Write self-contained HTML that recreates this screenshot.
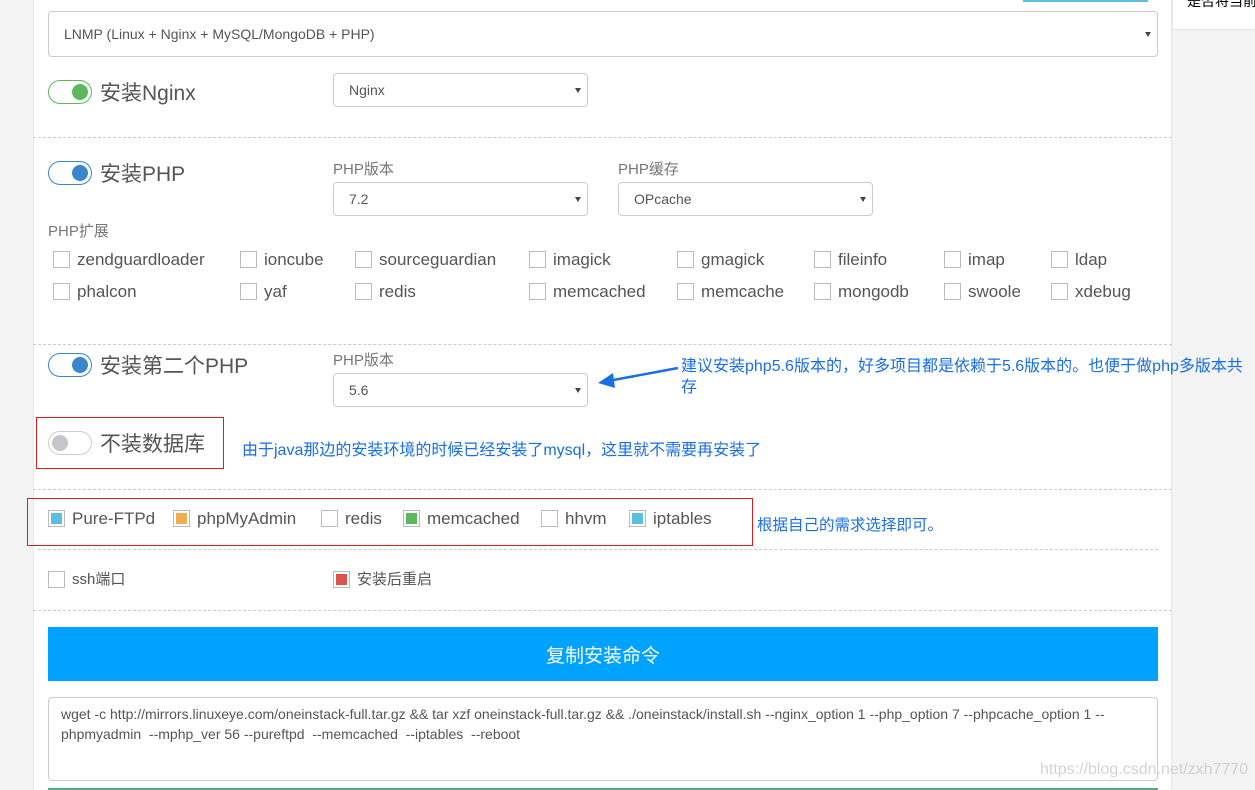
<!DOCTYPE html>
<html><head><meta charset="utf-8"><style>
*{margin:0;padding:0;box-sizing:border-box}
body{width:1255px;height:790px;background:#f3f3f3;position:relative;overflow:hidden;font-family:"Liberation Sans","Noto Sans CJK SC",sans-serif;color:#555}
.a{position:absolute;white-space:nowrap}
.panel{position:absolute;left:33px;top:0;width:1139px;height:790px;background:#fff;border-left:1px solid #e8e8e8;border-right:1px solid #e8e8e8}
.sel{position:absolute;border:1px solid #ccc;border-radius:4px;background:#fff;font-size:14px;color:#555;padding-left:15px;display:flex;align-items:center}
.sel:after{content:"";position:absolute;right:6px;top:50%;margin-top:-2px;border-left:3px solid transparent;border-right:3px solid transparent;border-top:5px solid #444}
.tg{position:absolute;width:44px;height:24px;border-radius:12px;border:1px solid}
.tg i{position:absolute;top:3px;width:16px;height:16px;border-radius:50%}
.big{font-size:21px;color:#555}
.lbl{font-size:15px;color:#777}
.hr{position:absolute;left:33px;width:1139px;border-top:1px dashed #ccc}
.cb{position:absolute;font-size:17px;color:#555;padding-left:24px;line-height:20px}
.cb:before{content:"";position:absolute;left:0;top:1px;width:17px;height:17px;border:1px solid #bbb;background:#fff;box-sizing:border-box}
.cb i{position:absolute;left:3px;top:4px;width:11px;height:11px}
.blue{color:#1a6ee6;font-size:16px}
.red{position:absolute;border:1px solid #e01b1b}
</style></head><body>
<div class="panel"></div>
<div class="a" style="left:1023px;top:0;width:125px;height:2px;background:#5bc0de"></div>
<div class="a" style="left:1172px;top:0;width:83px;height:30px;background:#fff;border-bottom:1px solid #e5e5e5;border-left:1px solid #e5e5e5"></div>
<div class="a" style="left:1187px;top:-9px;font-size:14px;color:#000">是否将当前</div>

<div class="sel" style="left:48px;top:11px;width:1110px;height:46px">LNMP (Linux + Nginx + MySQL/MongoDB + PHP)</div>

<div class="tg" style="left:48px;top:80px;border-color:#5cb85c"><i style="right:3px;background:#5cb85c"></i></div>
<div class="a big" style="left:100px;top:77px">安装Nginx</div>
<div class="sel" style="left:333px;top:73px;width:255px;height:34px">Nginx</div>
<div class="hr" style="top:137px"></div>

<div class="tg" style="left:48px;top:161px;border-color:#3a86c8"><i style="right:3px;background:#3a86c8"></i></div>
<div class="a big" style="left:100px;top:158px">安装PHP</div>
<div class="a lbl" style="left:333px;top:158px">PHP版本</div>
<div class="sel" style="left:333px;top:182px;width:255px;height:34px">7.2</div>
<div class="a lbl" style="left:618px;top:158px">PHP缓存</div>
<div class="sel" style="left:618px;top:182px;width:255px;height:34px">OPcache</div>
<div class="a lbl" style="left:48px;top:220px">PHP扩展</div>

<div class="cb" style="left:53px;top:250px">zendguardloader</div>
<div class="cb" style="left:240px;top:250px">ioncube</div>
<div class="cb" style="left:355px;top:250px">sourceguardian</div>
<div class="cb" style="left:529px;top:250px">imagick</div>
<div class="cb" style="left:677px;top:250px">gmagick</div>
<div class="cb" style="left:814px;top:250px">fileinfo</div>
<div class="cb" style="left:944px;top:250px">imap</div>
<div class="cb" style="left:1051px;top:250px">ldap</div>
<div class="cb" style="left:53px;top:282px">phalcon</div>
<div class="cb" style="left:240px;top:282px">yaf</div>
<div class="cb" style="left:355px;top:282px">redis</div>
<div class="cb" style="left:529px;top:282px">memcached</div>
<div class="cb" style="left:677px;top:282px">memcache</div>
<div class="cb" style="left:814px;top:282px">mongodb</div>
<div class="cb" style="left:944px;top:282px">swoole</div>
<div class="cb" style="left:1051px;top:282px">xdebug</div>
<div class="hr" style="top:344px"></div>

<div class="tg" style="left:48px;top:353px;border-color:#3a86c8"><i style="right:3px;background:#3a86c8"></i></div>
<div class="a big" style="left:100px;top:350px">安装第二个PHP</div>
<div class="a lbl" style="left:333px;top:349px">PHP版本</div>
<div class="sel" style="left:333px;top:373px;width:255px;height:34px">5.6</div>
<svg class="a" style="left:590px;top:360px" width="95" height="35"><line x1="88" y1="8" x2="18" y2="21" stroke="#1a6ee6" stroke-width="2.5"/><polygon points="8,23 23,13 25,28" fill="#1a6ee6"/></svg>
<div class="a blue" style="left:681px;top:352px">建议安装php5.6版本的，好多项目都是依赖于5.6版本的。也便于做php多版本共</div>
<div class="a blue" style="left:681px;top:373px">存</div>

<div class="red" style="left:36px;top:417px;width:188px;height:52px"></div>
<div class="tg" style="left:48px;top:431px;border-color:#ccc"><i style="left:3px;background:#c4c6c9"></i></div>
<div class="a big" style="left:100px;top:428px">不装数据库</div>
<div class="a blue" style="left:242px;top:436px">由于java那边的安装环境的时候已经安装了mysql，这里就不需要再安装了</div>
<div class="hr" style="top:489px"></div>

<div class="red" style="left:27px;top:498px;width:726px;height:48px"></div>
<div class="cb" style="left:48px;top:509px">Pure-FTPd<i style="background:#5bc0de"></i></div>
<div class="cb" style="left:173px;top:509px">phpMyAdmin<i style="background:#f0ad4e"></i></div>
<div class="cb" style="left:321px;top:509px">redis</div>
<div class="cb" style="left:403px;top:509px">memcached<i style="background:#5cb85c"></i></div>
<div class="cb" style="left:541px;top:509px">hhvm</div>
<div class="cb" style="left:629px;top:509px">iptables<i style="background:#5bc0de"></i></div>
<div class="a blue" style="left:757px;top:513px;font-size:15.5px">根据自己的需求选择即可。</div>
<div class="hr" style="top:549px;left:38px;width:1120px"></div>

<div class="cb" style="left:48px;top:570px;font-size:15px">ssh端口</div>
<div class="cb" style="left:333px;top:570px;font-size:15px">安装后重启<i style="background:#d9534f"></i></div>
<div class="hr" style="top:610px"></div>

<div class="a" style="left:48px;top:627px;width:1110px;height:54px;background:#00a2ff;color:#fff;font-size:19px;display:flex;align-items:center;justify-content:center">复制安装命令</div>
<div class="a" style="left:48px;top:697px;width:1110px;height:84px;border:1px solid #ccc;border-radius:4px;font-size:14px;line-height:20px;padding:6px 12px;white-space:normal;color:#555">wget -c http://mirrors.linuxeye.com/oneinstack-full.tar.gz &amp;&amp; tar xzf oneinstack-full.tar.gz &amp;&amp; ./oneinstack/install.sh --nginx_option 1 --php_option 7 --phpcache_option 1 --<br>phpmyadmin&nbsp; --mphp_ver 56 --pureftpd&nbsp; --memcached&nbsp; --iptables&nbsp; --reboot</div>
<div class="a" style="left:48px;top:788px;width:1110px;height:2px;background:#4caf7d"></div>
<div class="a" style="left:1040px;top:761px;font-size:16px;color:rgba(200,200,200,0.8)">https://blog.csdn.net/zxh7770</div>
</body></html>
